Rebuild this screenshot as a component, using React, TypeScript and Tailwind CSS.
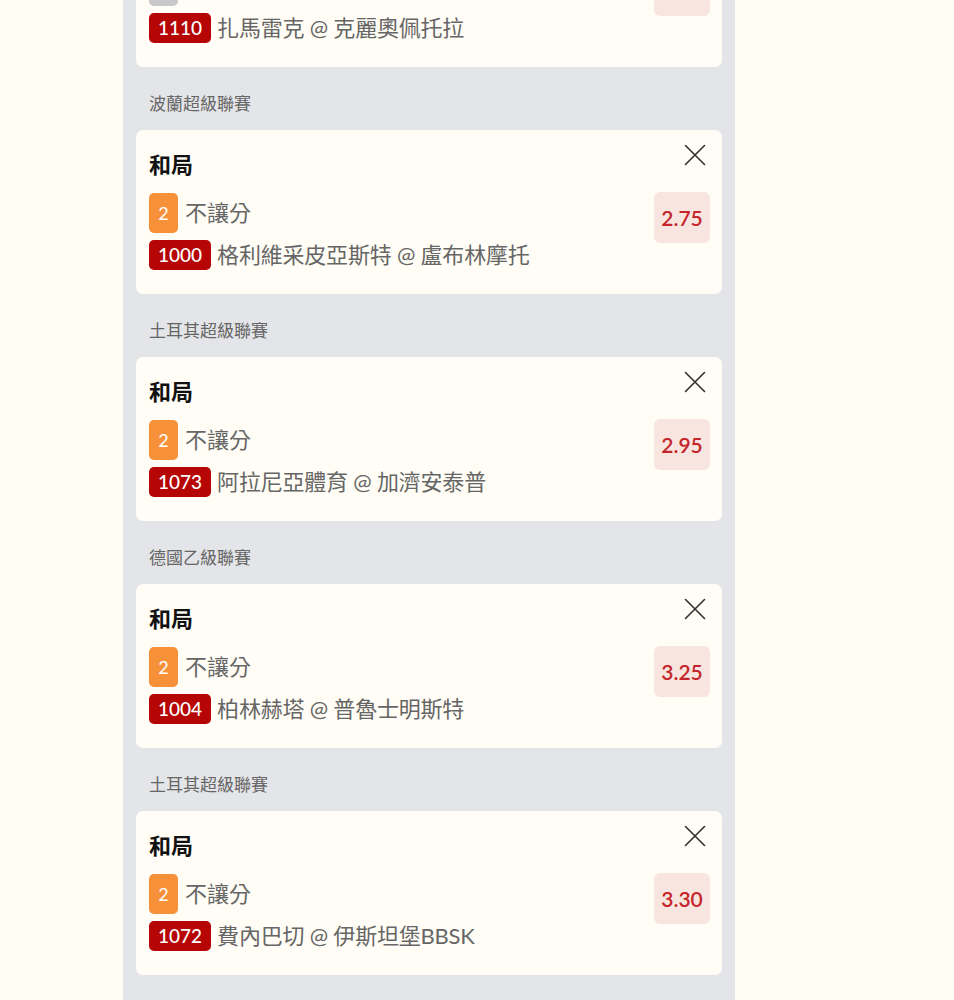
type Bet = {
  league: string;
  pick: string;
  line: string;
  lineNo: string;
  lineTone: "orange" | "gray";
  matchNo: string;
  match: string;
  odds: string;
};

const bets: Bet[] = [
  {
    league: "埃及超級聯賽",
    pick: "和局",
    line: "不讓分",
    lineNo: "2",
    lineTone: "gray",
    matchNo: "1110",
    match: "扎馬雷克 @ 克麗奧佩托拉",
    odds: "3.10",
  },
  {
    league: "波蘭超級聯賽",
    pick: "和局",
    line: "不讓分",
    lineNo: "2",
    lineTone: "orange",
    matchNo: "1000",
    match: "格利維采皮亞斯特 @ 盧布林摩托",
    odds: "2.75",
  },
  {
    league: "土耳其超級聯賽",
    pick: "和局",
    line: "不讓分",
    lineNo: "2",
    lineTone: "orange",
    matchNo: "1073",
    match: "阿拉尼亞體育 @ 加濟安泰普",
    odds: "2.95",
  },
  {
    league: "德國乙級聯賽",
    pick: "和局",
    line: "不讓分",
    lineNo: "2",
    lineTone: "orange",
    matchNo: "1004",
    match: "柏林赫塔 @ 普魯士明斯特",
    odds: "3.25",
  },
  {
    league: "土耳其超級聯賽",
    pick: "和局",
    line: "不讓分",
    lineNo: "2",
    lineTone: "orange",
    matchNo: "1072",
    match: "費內巴切 @ 伊斯坦堡BBSK",
    odds: "3.30",
  },
];

function CloseIcon() {
  return (
    <svg className="mt-[-7px] mr-[4px] h-[22px] w-[22px] text-[#2f2f2f]" viewBox="0 0 22 22" fill="none">
      <path d="M1.5 1.5l19 19M20.5 1.5l-19 19" stroke="currentColor" strokeWidth="1.6" strokeLinecap="round" />
    </svg>
  );
}

function BetCard({ bet }: { bet: Bet }) {
  return (
    <div>
      <div className="pt-[27px] pb-[16px] pl-[13px] text-[17px] leading-[20px] text-[#666666]">
        {bet.league}
      </div>
      <div className="flex justify-between rounded-[7px] bg-[#fffdf5] pt-[21px] pb-[24px] pl-[13px] pr-[12px]">
        <div className="flex flex-col">
          <div className="text-[22px] leading-[28px] font-bold text-[#111111]">
            {bet.pick}
          </div>
          <div className="mt-[14px] flex items-center gap-[7px]">
            <span
              className={
                bet.lineTone === "orange"
                  ? "flex h-[40px] w-[29px] items-center justify-center rounded-[5px] bg-[#f6913a] text-[18px] text-white"
                  : "flex h-[40px] w-[29px] items-center justify-center rounded-[5px] bg-[#c8c8cb] text-[18px] text-white"
              }
            >
              {bet.lineNo}
            </span>
            <span className="text-[22px] leading-[28px] text-[#666666]">{bet.line}</span>
          </div>
          <div className="mt-[7px] flex items-center gap-[6px]">
            <span className="flex h-[30px] items-center rounded-[5px] bg-[#b50505] px-[9px] text-[19px] font-medium text-white">
              {bet.matchNo}
            </span>
            <span className="text-[22px] leading-[28px] tracking-[-0.2px] text-[#666666]">{bet.match}</span>
          </div>
        </div>
        <div className="flex flex-col items-end">
          <CloseIcon />
          <div className="mt-[26px] flex h-[51px] w-[56px] items-center justify-center rounded-[6px] bg-[#f8e5df] text-[21px] font-semibold text-[#c4262b]">
            {bet.odds}
          </div>
        </div>
      </div>
    </div>
  );
}

export default function App() {
  return (
    <div
      className="h-[1000px] overflow-hidden bg-[#fffdf4]"
      style={{ fontFamily: '"Lato", "Noto Sans CJK TC", sans-serif' }}
    >
      <div className="ml-[123px] flex h-full w-[612px] flex-col bg-[#e4e5e8] px-[13px]">
        <div className="mt-[-160px]">
          {bets.map((b, i) => (
            <BetCard key={i} bet={b} />
          ))}
        </div>
      </div>
    </div>
  );
}
